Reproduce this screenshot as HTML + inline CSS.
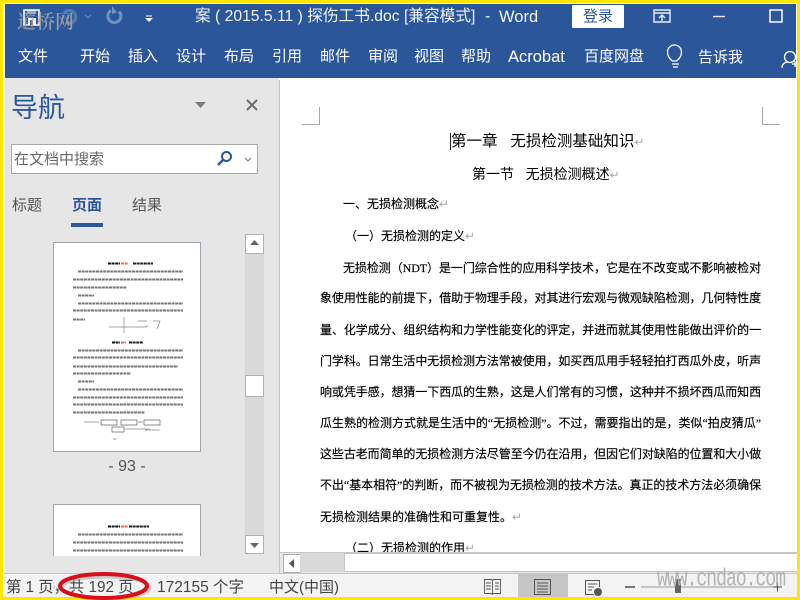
<!DOCTYPE html>
<html lang="zh"><head><meta charset="utf-8"><style>
html,body{margin:0;padding:0;width:800px;height:600px;overflow:hidden;background:#fff}
#r{position:relative;width:800px;height:600px;overflow:hidden;font-family:"Liberation Sans","Noto Sans CJK SC",sans-serif}
#r div,#r span.a{position:absolute;white-space:nowrap}
.t{color:#fff;font-size:15px;top:47px;line-height:20px}
#r .l{left:320px;width:441px;font-family:"Liberation Serif","WenQuanYi Zen Hei",sans-serif;font-size:12px;letter-spacing:-.1px;line-height:20px;color:#000;-webkit-text-stroke:.15px #000;text-align:justify;text-align-last:justify;text-justify:inter-character;white-space:normal;height:20px}
.s{font-family:"Liberation Serif","WenQuanYi Zen Hei",sans-serif;font-size:12px;line-height:20px;color:#000;-webkit-text-stroke:.15px #000}
.p{color:#aaa;font-size:12px;-webkit-text-stroke:0}
</style></head><body><div id="r">
<div style="left:4px;top:3px;width:793px;height:594px;background:#fff"></div>
<div style="left:5px;top:4px;width:791px;height:74px;background:#2b579a"></div>
<svg class="a" style="position:absolute;left:0;top:0" width="800" height="80">
<path d="M24 10h15v15h-15z" fill="none" stroke="#fff" stroke-width="1.600"/><path d="M28 18h8v7h-8z" fill="#fff"/><path d="M30 20h3v5h-3z" fill="#2b579a"/><path d="M27 10h9v4h-9z" fill="#fff" opacity=".5"/>
<path d="M64 13a6.500 6.500 0 1 1 3 10" fill="none" stroke="#7f9cc6" stroke-width="3" opacity=".5"/>
<path d="M85 15l3 3 3-3" fill="none" stroke="#6e8dbd" stroke-width="1"/>
<path d="M111 10.500a6.500 6.500 0 1 0 8 1" fill="none" stroke="#7391c0" stroke-width="3"/><path d="M112 6v8l5-1.500z" fill="#7391c0"/>
<path d="M146 16h6" stroke="#fff" stroke-width="1"/><path d="M145 18h8l-4 4z" fill="#fff"/>
<path d="M654 10h16v12h-16zM654 13h16M662 21v-6M659 18l3-3 3 3" fill="none" stroke="#e8edf5" stroke-width="1.400"/>
<path d="M713 16.500h12" stroke="#e8edf5" stroke-width="1.400"/>
<path d="M770 10h12v12h-12z" fill="none" stroke="#fff" stroke-width="1.500"/>
<g fill="none" stroke="#fff" stroke-width="1.300"><path d="M671 62c-4-3-5-6-5-9a7 7 0 0 1 14 0c0 3-1 6-5 9z" transform="translate(1.500 -1)"/><path d="M672 64h7M673 67h5" /></g>
<g fill="none" stroke="#fff" stroke-width="1.300"><circle cx="790" cy="57" r="5.500"/><path d="M782 68c0-4 3-6 6-6M792 64h6M795 61v6"/></g>
</svg>
<div style="left:195px;top:6px;color:#f2f5fa;font-size:15.700px;line-height:22px">案 ( 2015.5.11 ) 探伤工书.doc [兼容模式]</div>
<div style="left:485px;top:6px;color:#f2f5fa;font-size:16px;line-height:22px">-</div>
<div style="left:499px;top:6px;color:#f2f5fa;font-size:16.500px;line-height:22px">Word</div>
<div style="left:572px;top:5px;width:52px;height:23px;background:#fff;border-radius:1px;color:#2b579a;font-size:15px;line-height:23px;text-align:center">登录</div>
<div class="t" style="left:18px">文件</div><div class="t" style="left:80px">开始</div><div class="t" style="left:128px">插入</div><div class="t" style="left:176px">设计</div><div class="t" style="left:224px">布局</div><div class="t" style="left:272px">引用</div><div class="t" style="left:320px">邮件</div><div class="t" style="left:368px">审阅</div><div class="t" style="left:414px">视图</div><div class="t" style="left:461px">帮助</div><div class="t" style="left:508px;font-size:16.500px">Acrobat</div><div class="t" style="left:584px">百度网盘</div><div class="t" style="left:698px;top:48px">告诉我</div>
<div style="left:5px;top:78px;width:274px;height:495px;background:#e6e6e6"></div>
<div style="left:279px;top:80px;width:1px;height:493px;background:#c6c6c6"></div>
<div style="left:11px;top:90px;font-size:27px;line-height:36px;color:#2b579a">导航</div>
<svg style="position:absolute;left:190px;top:95px" width="75" height="20"><path d="M5 7h11l-5.500 6z" fill="#7a7a7a"/><path d="M57 5l10 10M67 5l-10 10" stroke="#6a6a6a" stroke-width="2"/></svg>
<div style="left:11px;top:144px;width:245px;height:28px;background:#fff;border:1px solid #a9a9a9"></div>
<div style="left:14px;top:150px;font-size:15px;line-height:20px;color:#6a6a6a">在文档中搜索</div>
<svg style="position:absolute;left:215px;top:148px" width="45" height="22"><circle cx="11.500" cy="8.500" r="4.500" fill="none" stroke="#2b579a" stroke-width="2"/><path d="M8 12l-5 5" stroke="#2b579a" stroke-width="2.500"/><path d="M30 10l3 3 3-3" fill="none" stroke="#777" stroke-width="1"/></svg>
<div style="left:12px;top:196px;font-size:15px;line-height:20px;color:#555">标题</div>
<div style="left:72px;top:196px;font-size:15px;line-height:20px;color:#2b579a;font-weight:700">页面</div>
<div style="left:132px;top:196px;font-size:15px;line-height:20px;color:#555">结果</div>
<div style="left:71px;top:223px;width:32px;height:4px;background:#2b579a"></div>
<div style="left:53px;top:242px;width:146px;height:208px;background:#fff;border:1px solid #a0a5ad"></div>
<svg style="position:absolute;left:54px;top:243px;filter:blur(.35px)" width="146" height="208" fill="none" stroke="#777" stroke-width="2" stroke-dasharray="3 .6">
<path d="M54 20.500h12" stroke="#111"/><path d="M67 20.500h7" stroke="#e66"/><path d="M79 20.500h20" stroke="#222"/>
<path d="M24 28.500h105M19 36.500h110M19 44.500h54M24 52.500h16M24 60.500h105M19 67.500h110M19 76.500h12M24 107.500h105M19 114.500h110M19 123.500h105M19 130.500h58M24 138.500h16M24 146.500h105M19 154.500h110M19 161.500h110M19 169.500h72"/>
<path d="M58 99.500h8" stroke="#111"/><path d="M67 99.500h5" stroke="#e66"/><path d="M75 99.500h14" stroke="#222"/>
<g stroke-dasharray="none" stroke-width=".7" stroke="#888"><path d="M55 84h12M70 74v16M67 84h26M93 84v-2M84 78h9M99 78h7l-3 8"/><path d="M47 177h16v5h-16zM67 177h16v5h-16zM90 177h16v5h-16zM58 184h12v5h-12z" stroke="#666"/><path d="M30 179h15M84 179h5M71 186h25"/></g>
<path d="M91 187h15M59 196h4" stroke="#999" stroke-width="1"/></svg>
<div style="left:53px;top:457px;width:148px;text-align:center;font-size:16px;line-height:20px;color:#555">- 93 -</div>
<div style="left:53px;top:504px;width:146px;height:60px;background:#fff;border:1px solid #a0a5ad"></div>
<svg style="position:absolute;left:54px;top:505px;filter:blur(.35px)" width="146" height="51" fill="none" stroke="#777" stroke-width="2" stroke-dasharray="3 .6"><path d="M54 21.500h12" stroke="#111"/><path d="M67 21.500h7" stroke="#e66"/><path d="M75 21.500h20" stroke="#222"/><path d="M24 29.500h105M19 37.500h110M19 45.500h110"/></svg>
<div style="left:5px;top:556px;width:274px;height:17px;background:#e6e6e6"></div>
<div style="left:245px;top:234px;width:19px;height:320px;background:#d9d9d9"></div>
<div style="left:245px;top:234px;width:17px;height:18px;background:#fff;border:1px solid #b0b0b0"></div>
<div style="left:245px;top:375px;width:17px;height:20px;background:#fff;border:1px solid #b0b0b0"></div>
<div style="left:245px;top:535px;width:17px;height:17px;background:#fff;border:1px solid #b0b0b0"></div>
<svg style="position:absolute;left:245px;top:234px" width="19" height="320"><path d="M5 11h9l-4.500-5z" fill="#666"/><path d="M5 309h9l-4.500 5z" fill="#666"/></svg>
<svg style="position:absolute;left:280px;top:100px" width="520" height="30" fill="none" stroke="#a8a8a8"><path d="M39.500 7v17.500h-17.500M482.500 7v17.500h17.500"/></svg>
<div style="left:450px;top:133px;width:1px;height:17px;background:#222"></div>
<div class="s" style="left:451px;top:132px;font-size:15.500px;font-family:'Liberation Sans','Noto Sans CJK SC',sans-serif;-webkit-text-stroke:0">第一章&nbsp;&nbsp;&nbsp;无损检测基础知识<span class="p">↵</span></div>
<div class="s" style="left:472px;top:164px;font-size:14px;font-family:'Liberation Sans','Noto Sans CJK SC',sans-serif;-webkit-text-stroke:0">第一节&nbsp;&nbsp;&nbsp;无损检测概述<span class="p">↵</span></div>
<div class="s" style="left:343px;top:194px">一、无损检测概念<span class="p">↵</span></div>
<div class="s" style="left:345px;top:226px">（一）无损检测的定义<span class="p">↵</span></div>
<div class="l" style="left:343px;width:418px;top:258px">无损检测（NDT）是一门综合性的应用科学技术，它是在不改变或不影响被检对</div>
<div class="l" style="top:288px">象使用性能的前提下，借助于物理手段，对其进行宏观与微观缺陷检测，几何特性度</div>
<div class="l" style="top:320px">量、化学成分、组织结构和力学性能变化的评定，并进而就其使用性能做出评价的一</div>
<div class="l" style="top:351px">门学科。日常生活中无损检测方法常被使用，如买西瓜用手轻轻拍打西瓜外皮，听声</div>
<div class="l" style="top:382px">响或凭手感，想猜一下西瓜的生熟，这是人们常有的习惯，这种并不损坏西瓜而知西</div>
<div class="l" style="top:413px">瓜生熟的检测方式就是生活中的“无损检测”。不过，需要指出的是，类似“拍皮猜瓜”</div>
<div class="l" style="top:444px">这些古老而简单的无损检测方法尽管至今仍在沿用，但因它们对缺陷的位置和大小做</div>
<div class="l" style="top:475px">不出“基本相符”的判断，而不被视为无损检测的技术方法。真正的技术方法必须确保</div>
<div class="s" style="left:320px;top:507px">无损检测结果的准确性和可重复性。<span class="p">↵</span></div>
<div class="s" style="left:345px;top:538px">（二）无损检测的作用<span class="p">↵</span></div>
<div style="left:280px;top:552px;width:517px;height:21px;background:#e6e6e6;border-top:1px solid #c6c6c6"></div>
<div style="left:283px;top:554px;width:16px;height:17px;background:#fff;border:1px solid #b0b0b0"></div>
<svg style="position:absolute;left:283px;top:554px" width="18" height="19"><path d="M11 5v9l-5-4.500z" fill="#555"/></svg>
<div style="left:300px;top:553px;width:44px;height:19px;background:#d9d9d9"></div>
<div style="left:344px;top:553px;width:453px;height:19px;background:#fff;border:1px solid #c6c6c6;border-right:0;box-sizing:border-box"></div>
<div style="left:4px;top:573px;width:793px;height:24px;background:#f3f3f3;border-top:1px solid #c6c6c6;box-sizing:border-box"></div>
<div style="left:6px;top:578px;font-size:15.300px;line-height:20px;color:#444">第 1 页，共 192 页</div>
<div style="left:157px;top:578px;font-size:15.500px;line-height:20px;color:#444">172155 个字</div>
<div style="left:269px;top:578px;font-size:15px;line-height:20px;color:#444">中文(中国)</div>
<div style="left:518px;top:574px;width:50px;height:23px;background:#c6c6c6"></div>
<svg style="position:absolute;left:480px;top:574px" width="320" height="24" fill="none" stroke="#555"><path d="M4.500 5.500h7l1 1 1-1h7v14h-7l-1 1-1-1h-7zM12.500 6v14M6 9h5M6 12h5M6 15h5M15 9h4M15 12h4M15 15h4" stroke-width=".9"/><path d="M54.500 5.500h16v15h-16zM57 9h11M57 12h11M57 15h11M57 18h11" stroke-width="1"/><path d="M105.500 6.500h14v14h-14zM108 10h9M108 13h6M108 16h4" stroke-width="1"/><circle cx="118" cy="18" r="4.500" fill="#555" stroke="#f3f3f3"/><path d="M145 13h10" stroke="#333" stroke-width="1.300"/><path d="M161 13h137" stroke="#999"/><path d="M293 13h9M297.500 8.500v9" stroke="#444" stroke-width="1"/></svg>
<div style="left:675px;top:579px;width:6px;height:14px;background:#666"></div>
<div style="left:657px;top:565px;width:130px;font-family:'Liberation Mono',monospace;font-size:18px;line-height:30px;color:#b0b3b6;transform:scaleY(1.400);transform-origin:0 50%;letter-spacing:-.950px">www.cndao.com</div>
<div style="left:17px;top:6px;font-family:'Noto Serif CJK SC',serif;font-size:19px;line-height:30px;color:#a9a8a4;font-weight:600;opacity:.85">道桥网</div>
<div style="left:0;top:0;width:800px;height:3px;background:#ffe600"></div>
<div style="left:0;top:0;width:3px;height:600px;background:#ffe600"></div>
<div style="left:797px;top:0;width:3px;height:600px;background:#ffe600"></div>
<div style="left:0;top:597px;width:800px;height:3px;background:#ffe600"></div>
<svg style="position:absolute;left:50px;top:566px" width="110" height="34" fill="none"><ellipse cx="56" cy="22" rx="44" ry="11" stroke="#999" stroke-width="3" opacity=".45"/><ellipse cx="53.500" cy="20" rx="43.500" ry="12" stroke="#d8101c" stroke-width="4"/></svg>
</div></body></html>
